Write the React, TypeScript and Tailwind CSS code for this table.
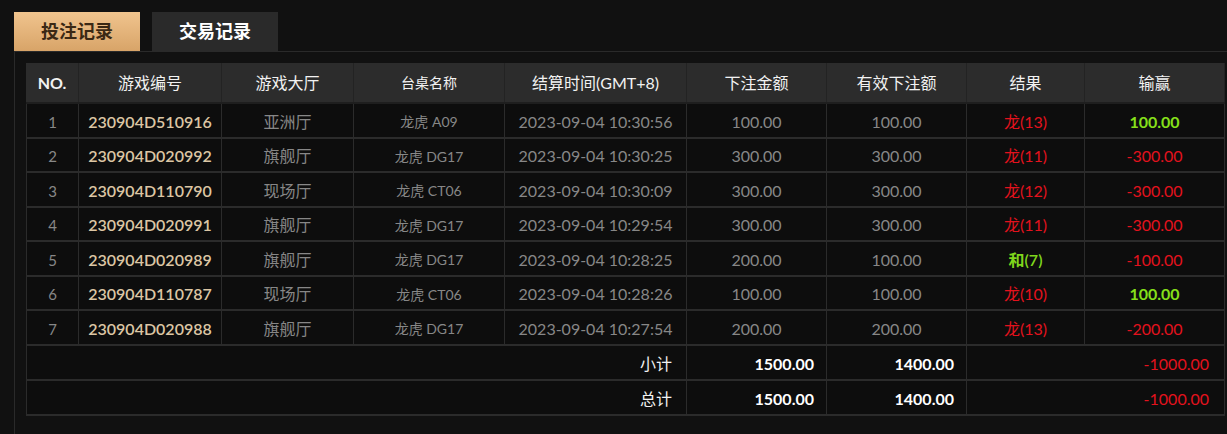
import React from 'react';

const FONT = { fontFamily: 'Lato, "Noto Sans CJK SC", sans-serif' };

const COLS = 'grid grid-cols-[53px_143px_132px_151px_182px_140px_140px_118px_140px]';

const HEADERS = ['NO.', '游戏编号', '游戏大厅', '台桌名称', '结算时间(GMT+8)', '下注金额', '有效下注额', '结果', '输赢'];

const ROWS = [
  { no: 1, id: '230904D510916', hall: '亚洲厅', table: '龙虎 A09', time: '2023-09-04 10:30:56', bet: '100.00', valid: '100.00', result: '龙(13)', tie: false, win: '100.00' },
  { no: 2, id: '230904D020992', hall: '旗舰厅', table: '龙虎 DG17', time: '2023-09-04 10:30:25', bet: '300.00', valid: '300.00', result: '龙(11)', tie: false, win: '-300.00' },
  { no: 3, id: '230904D110790', hall: '现场厅', table: '龙虎 CT06', time: '2023-09-04 10:30:09', bet: '300.00', valid: '300.00', result: '龙(12)', tie: false, win: '-300.00' },
  { no: 4, id: '230904D020991', hall: '旗舰厅', table: '龙虎 DG17', time: '2023-09-04 10:29:54', bet: '300.00', valid: '300.00', result: '龙(11)', tie: false, win: '-300.00' },
  { no: 5, id: '230904D020989', hall: '旗舰厅', table: '龙虎 DG17', time: '2023-09-04 10:28:25', bet: '200.00', valid: '100.00', result: '和(7)', tie: true, win: '-100.00' },
  { no: 6, id: '230904D110787', hall: '现场厅', table: '龙虎 CT06', time: '2023-09-04 10:28:26', bet: '100.00', valid: '100.00', result: '龙(10)', tie: false, win: '100.00' },
  { no: 7, id: '230904D020988', hall: '旗舰厅', table: '龙虎 DG17', time: '2023-09-04 10:27:54', bet: '200.00', valid: '200.00', result: '龙(13)', tie: false, win: '-200.00' },
];

const cell = 'flex items-center justify-center border-r border-[#2b2b2b] whitespace-nowrap';

function SummaryRow({ label }: { label: string }) {
  return (
    <div className="grid grid-cols-[661px_140px_140px_258px] h-[35px] bg-[#0d0d0d] border-b-2 border-[#2b2b2b] text-[16px]">
      <div className="flex items-center justify-end pt-[3px] pr-[14px] border-r border-l border-[#2b2b2b] text-[#f2f2f2]">{label}</div>
      <div className="flex items-center justify-end pt-[3px] pr-[12px] border-r border-[#2b2b2b] text-white font-bold">1500.00</div>
      <div className="flex items-center justify-end pt-[3px] pr-[12px] border-r border-[#2b2b2b] text-white font-bold">1400.00</div>
      <div className="flex items-center justify-end pt-[3px] pr-[15px] border-r border-[#2b2b2b] text-[#e3121d]">-1000.00</div>
    </div>
  );
}

export default function App() {
  return (
    <div className="w-[1227px] h-[434px] overflow-hidden bg-[#111111] pt-3 pl-[14px]" style={FONT}>
      {/* Tabs */}
      <div className="flex gap-3">
        <button className="w-[126px] h-[39px] bg-gradient-to-b from-[#f0c48e] to-[#d8a468] text-[#3a2814] text-[18px] font-bold">
          投注记录
        </button>
        <button className="w-[126px] h-[39px] bg-[#2a2a2a] text-white text-[18px] font-bold">
          交易记录
        </button>
      </div>

      {/* Panel */}
      <div className="border-t border-l border-[#2a2a2a] pl-[11px] pt-[11px] h-full">
        <div className="w-[1199px]">
          <div className={`${COLS} h-[41px] bg-[#2c2c2c] text-[#f2f2f2] text-[16px] border-b-2 border-[#1e1e1e]`}>
            {HEADERS.map((h, i) => (
              <div
                key={h}
                className={`${cell} border-[#232323] ${i === 0 ? 'font-bold' : ''} ${i === 3 ? 'text-[14px]' : ''}`}
              >
                {h}
              </div>
            ))}
          </div>

          {ROWS.map((r) => (
            <div key={r.no} className={`${COLS} h-[34.5px] bg-[#0d0d0d] border-b-2 border-[#2b2b2b] text-[16px] text-[#878787] [&>div]:pt-[3px]`}>
              <div className={`${cell} border-l text-[15px]`}>{r.no}</div>
              <div className={`${cell} text-[#dcc6a4] font-semibold`}>{r.id}</div>
              <div className={cell}>{r.hall}</div>
              <div className={`${cell} text-[14px]`}>{r.table}</div>
              <div className={cell}>{r.time}</div>
              <div className={cell}>{r.bet}</div>
              <div className={cell}>{r.valid}</div>
              <div className={`${cell} ${r.tie ? 'text-[#7fd61c] font-semibold' : 'text-[#e3121d]'}`}>{r.result}</div>
              <div className={`${cell} ${r.win.startsWith('-') ? 'text-[#e3121d]' : 'text-[#86e01a] font-bold'}`}>{r.win}</div>
            </div>
          ))}

          <SummaryRow label="小计" />
          <SummaryRow label="总计" />
        </div>
      </div>
    </div>
  );
}
